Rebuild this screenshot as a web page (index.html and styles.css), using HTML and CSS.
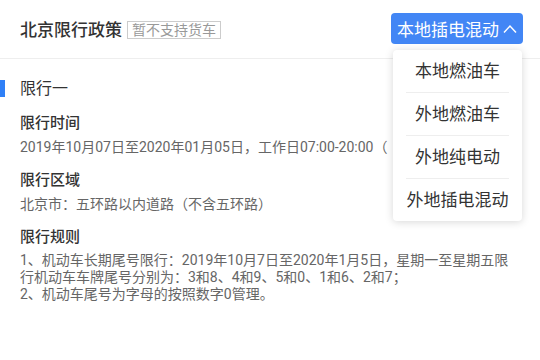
FILE: index.html
```html
<html lang="zh-CN">

<head>
    <meta charset="UTF-8">
    <meta name="viewport" content="width=device-width, initial-scale=1.0">
    <title>北京限行政策</title>

    <link rel="stylesheet" href="styles.css">
</head>

<body>

    <div class="page">

        <div class="header">
            <div class="title-wrap">
                <span class="title">北京限行政策</span>
                <span class="tag">暂不支持货车</span>
            </div>
            <button class="type-btn">
                本地插电混动
                <svg width="14" height="10" viewBox="0 0 14 10">
                    <polyline points="1,8.5 7,2 13,8.5" fill="none" stroke="#fff" stroke-width="1.5" />
                </svg>
            </button>
        </div>

        <div class="content">
            <div class="sec-title">限行一</div>

            <div class="item">
                <div class="item-title">限行时间</div>
                <div class="item-text nowrap">2019年10月07日至2020年01月05日，工作日07:00-20:00（</div>
            </div>

            <div class="item">
                <div class="item-title">限行区域</div>
                <div class="item-text">北京市：五环路以内道路（不含五环路）</div>
            </div>

            <div class="item">
                <div class="item-title">限行规则</div>
                <div class="item-text rules">1、机动车长期尾号限行：2019年10月7日至2020年1月5日，星期一至星期五限行机动车车牌尾号分别为：3和8、4和9、5和0、1和6、2和7；<br>2、机动车尾号为字母的按照数字0管理。</div>
            </div>
        </div>

        <ul class="dropdown">
            <li>本地燃油车</li>
            <li>外地燃油车</li>
            <li>外地纯电动</li>
            <li>外地插电混动</li>
        </ul>

    </div>

</body>

</html>
```

FILE: styles.css
```css
body {
    background: #fff;
    margin: 0px;
    padding: 0px;
    font-family: "Roboto", "Noto Sans CJK SC", sans-serif;
    color: #333;
    text-spacing-trim: space-all;
}
.page {
    position: relative;
    width: 540px;
    height: 360px;
    overflow: hidden;
}
.header {
    height: 58px;
    border-bottom: 1px solid #eee;
    display: flex;
    align-items: center;
    justify-content: space-between;
    padding: 0 17px 0 20px;
}
.title-wrap {
    display: flex;
    align-items: center;
    padding-top: 1px;
}
.title {
    font-size: 17px;
    font-weight: 500;
    color: #333;
    line-height: 22px;
}
.tag {
    margin-left: 5px;
    padding: 0 4px;
    font-size: 14px;
    line-height: 16px;
    color: #999;
    border: 1px solid #ccc;
}
.type-btn {
    display: flex;
    align-items: center;
    gap: 4px;
    height: 31px;
    padding: 0 6px;
    margin-top: -1px;
    border: 0px;
    border-radius: 4px;
    background-color: #4286f5;
    color: #fff;
    font-family: inherit;
    font-size: 17px;
}
.content {
    padding: 19px 20px 0 20px;
}
.sec-title {
    position: relative;
    font-size: 16px;
    line-height: 22px;
    margin-bottom: 13px;
}
.sec-title::before {
    content: "";
    position: absolute;
    left: -20px;
    top: 2px;
    width: 5px;
    height: 17px;
    background-color: #2f80f7;
}
.item {
    margin-bottom: 13px;
}
.item-title {
    font-size: 15px;
    font-weight: 500;
    line-height: 20px;
    color: #333;
}
.item-text {
    margin-top: 4px;
    font-size: 14px;
    line-height: 20px;
    color: #666;
}
.nowrap {
    white-space: nowrap;
}
.rules {
    margin-top: 5px;
    line-height: 17px;
}
.dropdown {
    position: absolute;
    top: 50px;
    right: 18px;
    width: 129px;
    margin: 0;
    padding: 0;
    list-style: none;
    background: #fff;
    border-radius: 4px;
    box-shadow: 0px 1px 8px rgba(0, 0, 0, 0.16);
}
.dropdown li {
    height: 42px;
    line-height: 42px;
    margin: 0 13px;
    text-align: center;
    font-size: 17px;
    color: #333;
    border-bottom: 1px solid #eee;
}
.dropdown li:last-child {
    border-bottom: 0px;
}
```
